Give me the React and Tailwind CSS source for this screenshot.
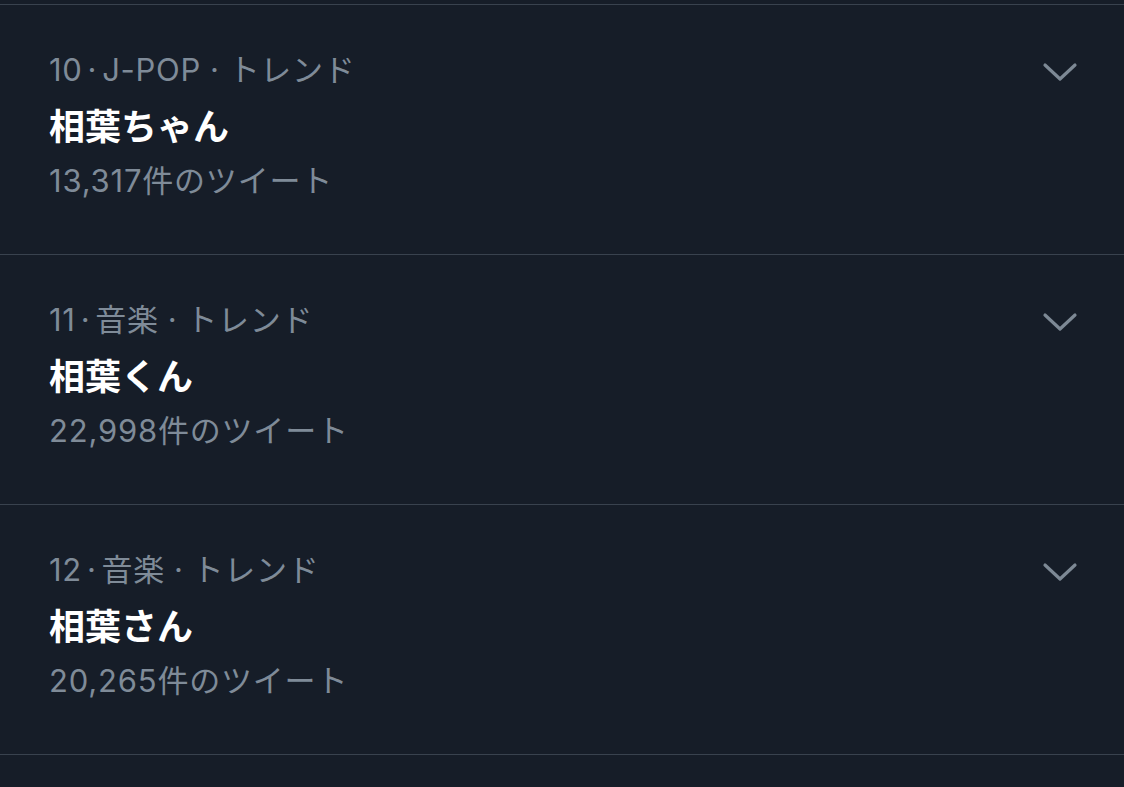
const trends = [
  { rank: 10, category: 'J-POP', title: '相葉ちゃん', count: '13,317' },
  { rank: 11, category: '音楽', title: '相葉くん', count: '22,998' },
  { rank: 12, category: '音楽', title: '相葉さん', count: '20,265' },
];

function Chevron() {
  return (
    <svg width="36" height="22" viewBox="0 0 36 22" fill="none">
      <polyline
        points="3,4 18,18 33,4"
        stroke="#7d8995"
        strokeWidth="3.2"
        strokeLinecap="round"
        strokeLinejoin="round"
      />
    </svg>
  );
}

function TrendRow({ rank, category, title, count }) {
  return (
    <div className="border-t border-[#39424e] pl-[49px] pr-[46px] pt-[43px] pb-[54px]">
      <div className="flex items-center justify-between h-[44px]">
        <div className="text-[31px] leading-[44px] tracking-[0.7px] text-[#7f8b98]">
          {rank}<span className="mx-[5px]">·</span>{category}<span className="mx-[9px]">·</span>トレンド
        </div>
        <div className="mt-[4px]">
          <Chevron />
        </div>
      </div>
      <div className="text-[36px] leading-[70px] font-bold text-white">{title}</div>
      <div className="text-[31px] leading-[38px] tracking-[0.8px] text-[#7f8b98]">{count}件のツイート</div>
    </div>
  );
}

export default function App() {
  return (
    <div
      className="w-[1124px] h-[787px] overflow-hidden bg-[#161d28]"
      style={{ fontFamily: 'Inter, "Noto Sans CJK JP", sans-serif' }}
    >
      <div className="h-[4px]" />
      {trends.map((t) => (
        <TrendRow key={t.rank} {...t} />
      ))}
      <div className="border-t border-[#39424e]" />
    </div>
  );
}
